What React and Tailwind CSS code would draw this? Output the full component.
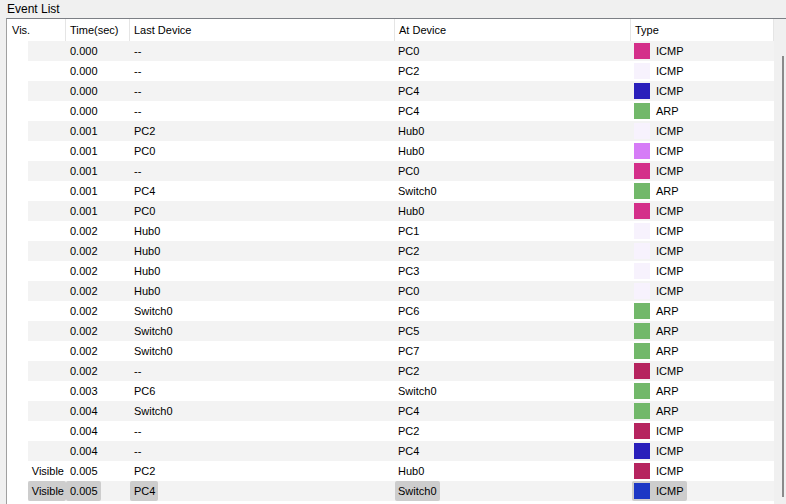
import React from 'react';

const SWATCH = {
  magenta: 'bg-[#d42f8a]',
  pale: 'bg-[#f7f2fd]',
  blue: 'bg-[#2a1fbb]',
  green: 'bg-[#72b86a]',
  violet: 'bg-[#d67cf7]',
  wine: 'bg-[#b6245f]',
  selBlue: 'bg-[#1c37c5]',
};

const events = [
  { vis: '', time: '0.000', last: '--', at: 'PC0', color: 'magenta', type: 'ICMP' },
  { vis: '', time: '0.000', last: '--', at: 'PC2', color: 'pale', type: 'ICMP' },
  { vis: '', time: '0.000', last: '--', at: 'PC4', color: 'blue', type: 'ICMP' },
  { vis: '', time: '0.000', last: '--', at: 'PC4', color: 'green', type: 'ARP' },
  { vis: '', time: '0.001', last: 'PC2', at: 'Hub0', color: 'pale', type: 'ICMP' },
  { vis: '', time: '0.001', last: 'PC0', at: 'Hub0', color: 'violet', type: 'ICMP' },
  { vis: '', time: '0.001', last: '--', at: 'PC0', color: 'magenta', type: 'ICMP' },
  { vis: '', time: '0.001', last: 'PC4', at: 'Switch0', color: 'green', type: 'ARP' },
  { vis: '', time: '0.001', last: 'PC0', at: 'Hub0', color: 'magenta', type: 'ICMP' },
  { vis: '', time: '0.002', last: 'Hub0', at: 'PC1', color: 'pale', type: 'ICMP' },
  { vis: '', time: '0.002', last: 'Hub0', at: 'PC2', color: 'pale', type: 'ICMP' },
  { vis: '', time: '0.002', last: 'Hub0', at: 'PC3', color: 'pale', type: 'ICMP' },
  { vis: '', time: '0.002', last: 'Hub0', at: 'PC0', color: 'pale', type: 'ICMP' },
  { vis: '', time: '0.002', last: 'Switch0', at: 'PC6', color: 'green', type: 'ARP' },
  { vis: '', time: '0.002', last: 'Switch0', at: 'PC5', color: 'green', type: 'ARP' },
  { vis: '', time: '0.002', last: 'Switch0', at: 'PC7', color: 'green', type: 'ARP' },
  { vis: '', time: '0.002', last: '--', at: 'PC2', color: 'wine', type: 'ICMP' },
  { vis: '', time: '0.003', last: 'PC6', at: 'Switch0', color: 'green', type: 'ARP' },
  { vis: '', time: '0.004', last: 'Switch0', at: 'PC4', color: 'green', type: 'ARP' },
  { vis: '', time: '0.004', last: '--', at: 'PC2', color: 'wine', type: 'ICMP' },
  { vis: '', time: '0.004', last: '--', at: 'PC4', color: 'blue', type: 'ICMP' },
  { vis: 'Visible', time: '0.005', last: 'PC2', at: 'Hub0', color: 'wine', type: 'ICMP' },
  { vis: 'Visible', time: '0.005', last: 'PC4', at: 'Switch0', color: 'selBlue', type: 'ICMP', selected: true },
];

const EventRow = ({ ev, index }) => {
  const stripe = index % 2 === 0 ? 'bg-[#f3f3f3]' : 'bg-white';
  const sel = ev.selected ? 'bg-[#cdcdcd] rounded-[2px]' : '';

  return (
    <div className={`ml-[21px] flex h-[20px] w-[746px] ${stripe}`}>
      {/* Vis. */}
      <div className="flex h-full w-[38px]">
        <span className={`flex h-full w-full items-center justify-end pr-[2px] ${ev.vis ? sel : ''}`}>
          {ev.vis}
        </span>
      </div>
      {/* Time(sec) */}
      <div className="flex h-full w-[64px]">
        <span className={`flex h-full items-center pl-[4px] pr-[3px] ${sel}`}>{ev.time}</span>
      </div>
      {/* Last Device */}
      <div className="flex h-full w-[265px]">
        <span className={`flex h-full items-center pl-[4px] pr-[3px] ${sel}`}>{ev.last}</span>
      </div>
      {/* At Device */}
      <div className="flex h-full w-[236px]">
        <span className={`flex h-full items-center pl-[3px] pr-[3px] ${sel}`}>{ev.at}</span>
      </div>
      {/* Type */}
      <div className="flex h-full w-[143px] pl-[1px]">
        <span className={`flex h-full items-center gap-[6px] pl-[2px] pr-[3px] ${sel}`}>
          <span className={`h-[16px] w-[16px] ${SWATCH[ev.color]}`} />
          {ev.type}
        </span>
      </div>
    </div>
  );
};

export default function App() {
  return (
    <div
      className="h-[504px] w-[786px] overflow-hidden bg-[#f0f0f0] text-[11px] text-black"
      style={{ fontFamily: '"Liberation Sans", Arial, sans-serif' }}
    >
      <div className="flex h-[18px] items-center pl-[7px] text-[12px] leading-none">Event List</div>

      <div className="ml-[6px] flex h-[486px] border-l border-t border-l-[#a0a0a0] border-t-[#7c7f85]">
        {/* table */}
        <div className="w-[767px] bg-white">
          <div className="flex h-[22px] w-[767px] bg-white">
            <div className="flex w-[59px] items-center border-r border-[#e5e5e5] pl-[5px]">Vis.</div>
            <div className="flex w-[64px] items-center border-r border-[#e5e5e5] pl-[4px]">Time(sec)</div>
            <div className="flex w-[265px] items-center border-r border-[#e5e5e5] pl-[4px]">Last Device</div>
            <div className="flex w-[236px] items-center border-r border-[#e5e5e5] pl-[4px]">At Device</div>
            <div className="flex w-[143px] items-center border-r border-[#e5e5e5] pl-[4px]">Type</div>
          </div>
          {events.map((ev, i) => (
            <EventRow key={i} ev={ev} index={i} />
          ))}
        </div>

        {/* scrollbar */}
        <div className="w-[12px] bg-[#f0f0f0] pt-[37px]">
          <div className="ml-[8px] h-[441px] w-[2px] bg-[#8a8a8a]" />
        </div>
      </div>
    </div>
  );
}
